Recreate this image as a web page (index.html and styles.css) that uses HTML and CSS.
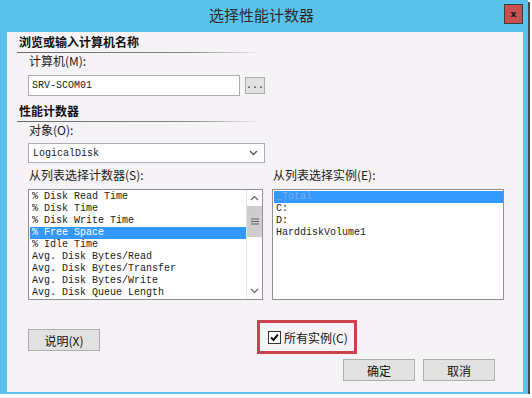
FILE: index.html
```html
<!DOCTYPE html>
<html lang="zh-CN">
<head>
    <meta charset="UTF-8">
    <title>选择性能计数器</title>
    <link rel="stylesheet" href="styles.css">
</head>
<body>
    <div class="window">
        <div class="titlebar">
            <span class="title">选择性能计数器</span>
            <span class="close">x</span>
        </div>

        <div class="client">
            <div class="group-title">浏览或输入计算机名称</div>
            <div class="label">计算机(M):</div>
            <div class="machine-row">
                <div class="textbox">SRV-SCOM01</div>
                <button class="btn-dots">...</button>
            </div>

            <div class="group-title">性能计数器</div>
            <div class="label">对象(O):</div>
            <div class="select">
                <span>LogicalDisk</span>
                <svg width="9" height="6" viewBox="0 0 9 6"><path d="M1 1 L4.5 4.5 L8 1" fill="none" stroke="#555" stroke-width="1.4"/></svg>
            </div>

            <div class="lists">
                <div class="col">
                    <div class="label">从列表选择计数器(S):</div>
                    <div class="listbox">
                        <ul class="items">
                            <li>% Disk Read Time</li>
                            <li>% Disk Time</li>
                            <li>% Disk Write Time</li>
                            <li class="selected">% Free Space</li>
                            <li>% Idle Time</li>
                            <li>Avg. Disk Bytes/Read</li>
                            <li>Avg. Disk Bytes/Transfer</li>
                            <li>Avg. Disk Bytes/Write</li>
                            <li>Avg. Disk Queue Length</li>
                        </ul>
                        <div class="scrollbar">
                            <div class="arrow">
                                <svg width="9" height="6" viewBox="0 0 9 6"><path d="M1 5 L4.5 1.5 L8 5" fill="none" stroke="#606060" stroke-width="1.2"/></svg>
                            </div>
                            <div class="thumb">
                                <svg width="8" height="7" viewBox="0 0 8 7"><path d="M0 1 H8 M0 3.5 H8 M0 6 H8" stroke="#606060" stroke-width="1.2"/></svg>
                            </div>
                            <div class="track"></div>
                            <div class="arrow">
                                <svg width="9" height="6" viewBox="0 0 9 6"><path d="M1 1 L4.5 4.5 L8 1" fill="none" stroke="#606060" stroke-width="1.2"/></svg>
                            </div>
                        </div>
                    </div>
                </div>
                <div class="col">
                    <div class="label">从列表选择实例(E):</div>
                    <div class="listbox">
                        <ul class="items">
                            <li class="selected dim">_Total</li>
                            <li>C:</li>
                            <li>D:</li>
                            <li>HarddiskVolume1</li>
                        </ul>
                    </div>
                </div>
            </div>

            <div class="footer">
                <div class="footer-row">
                    <button class="btn btn-explain">说明(X)</button>
                    <label class="highlight">
                        <span class="checkbox">
                            <svg width="11" height="11" viewBox="0 0 11 11"><path d="M2 5.5 L4.5 8 L9 2.5" fill="none" stroke="#111" stroke-width="2"/></svg>
                        </span>
                        所有实例(C)
                    </label>
                </div>
                <div class="actions">
                    <button class="btn">确定</button>
                    <button class="btn">取消</button>
                </div>
            </div>
        </div>
    </div>
</body>
</html>
```

FILE: styles.css
```css
:root {
    --frame-color: #5bc3eb;
    --client-bg: #f6f3f6;
    --button-bg: #e1e1e1;
    --button-border: #adadad;
    --list-border: #8e8f94;
    --select-color: #3399ff;
}

* {
    box-sizing: border-box;
    margin: 0;
    padding: 0;
}

body {
    background-color: #fff;
    font-family: "Noto Sans CJK SC", sans-serif;
    font-size: 12px;
    color: #1a1a1a;
}

.window {
    width: 528px;
    height: 394px;
    background-color: var(--frame-color);
    box-shadow: 2px 2px 0 #4a4a4a;
    padding: 0 5px 0 7px;
}

.titlebar {
    height: 32px;
    display: flex;
    align-items: flex-start;
}

.title {
    flex: 1;
    text-align: center;
    padding: 5px 0 0 12px;
    line-height: 20px;
    font-size: 15px;
    color: #2b2b2b;
}

.close {
    width: 19px;
    height: 20px;
    margin-top: 4px;
    background-color: #c75050;
    border: 1px solid #3f3f3f;
    color: #111;
    font-family: "DejaVu Sans", sans-serif;
    font-size: 9px;
    font-weight: bold;
    display: flex;
    align-items: center;
    justify-content: center;
}

.client {
    height: 360px;
    background-color: var(--client-bg);
    padding: 2px 19px 0 21px;
}

.group-title {
    width: 246px;
    margin-left: -11px;
    padding: 0 0 3px 2px;
    line-height: 16px;
    font-weight: bold;
    color: #111;
    background: linear-gradient(to right, #6a6a6a, #8a8a8a 70%, rgba(255, 255, 255, 0)) bottom / 100% 1px no-repeat;
}

.label {
    line-height: 14px;
    margin-top: 1px;
    padding-left: 1px;
}

.machine-row {
    display: flex;
    align-items: center;
    margin-top: 7px;
}

.textbox {
    width: 212px;
    height: 21px;
    background-color: #fff;
    border: 1px solid #abadb3;
    padding: 0 3px;
    font-family: "Liberation Mono", monospace;
    font-size: 10px;
    line-height: 19px;
}

.btn-dots {
    width: 20px;
    height: 17px;
    margin-left: 5px;
    background-color: var(--button-bg);
    border: 1px solid var(--button-border);
    font-family: "Liberation Mono", monospace;
    font-size: 10px;
    line-height: 12px;
    color: #222;
}

.machine-row + .group-title {
    margin-top: 7px;
}

.select {
    width: 237px;
    height: 20px;
    margin-top: 6px;
    background-color: #fff;
    border: 1px solid #abadb3;
    display: flex;
    align-items: center;
    justify-content: space-between;
    padding: 0 6px 0 4px;
    font-family: "Liberation Mono", monospace;
    font-size: 10px;
}

.lists {
    display: grid;
    grid-template-columns: 235px 232px;
    column-gap: 9px;
    margin-top: 5px;
}

.lists .label {
    margin-top: 0;
}

.listbox {
    height: 111px;
    margin-top: 7px;
    background-color: #fff;
    border: 1px solid var(--list-border);
    display: flex;
    overflow: hidden;
}

.items {
    flex: 1;
    list-style: none;
    padding: 1px 0 0 1px;
    font-family: "Liberation Mono", monospace;
    font-size: 10px;
}

.items li {
    height: 12px;
    line-height: 12px;
    padding-left: 2px;
    white-space: pre;
}

.items li.selected {
    background-color: var(--select-color);
    color: #fff;
}

.items li.dim {
    color: #82aee0;
}

.scrollbar {
    width: 16px;
    display: flex;
    flex-direction: column;
    border-left: 1px solid #e6e6e6;
    background-color: #fff;
}

.arrow {
    height: 16px;
    display: flex;
    align-items: center;
    justify-content: center;
}

.thumb {
    height: 31px;
    background-color: #cdcdcd;
    display: flex;
    align-items: center;
    justify-content: center;
}

.track {
    flex: 1;
}

.footer-row {
    display: flex;
    align-items: flex-start;
}

.btn {
    width: 72px;
    height: 22px;
    background-color: var(--button-bg);
    border: 1px solid var(--button-border);
    font-family: "Noto Sans CJK SC", sans-serif;
    font-size: 12px;
    color: #111;
}

.btn-explain {
    margin-top: 29px;
}

.highlight {
    width: 100px;
    height: 34px;
    margin-top: 20px;
    margin-left: 157px;
    border: 3px solid #c9434f;
    display: flex;
    align-items: center;
    gap: 3px;
    padding-left: 8px;
    color: #111;
}

.checkbox {
    width: 13px;
    height: 13px;
    background-color: #fff;
    border: 1px solid #333;
    display: flex;
    align-items: center;
    justify-content: center;
}

.actions {
    display: flex;
    justify-content: flex-end;
    gap: 8px;
    margin-top: 5px;
    padding-right: 9px;
}
```
